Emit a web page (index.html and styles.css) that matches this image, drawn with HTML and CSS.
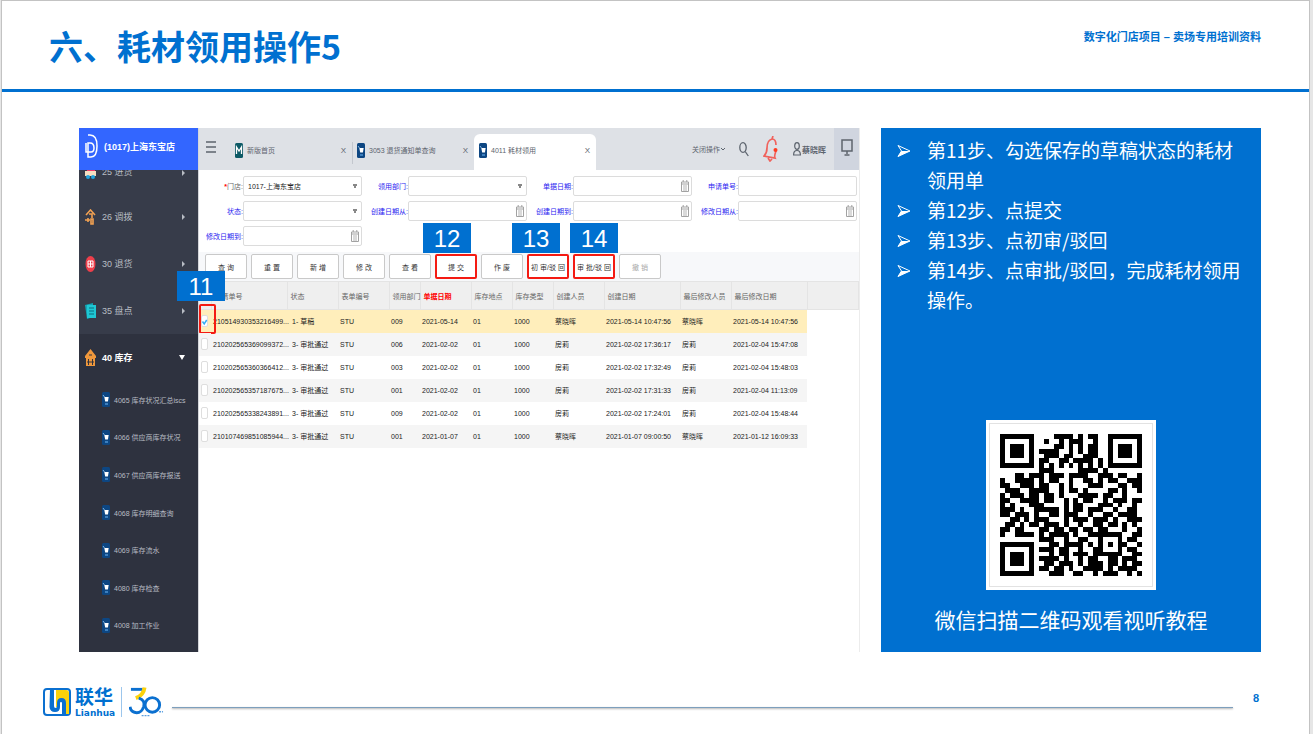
FILE: index.html
```html
<!DOCTYPE html>
<html lang="zh-CN">
<head>
  <meta charset="UTF-8" />
  <meta name="viewport" content="width=device-width, initial-scale=1.0"/>
  <title>六、耗材领用操作5</title>
  <link rel="stylesheet" href="styles.css">
</head>
<body>
  <!-- Shared icons -->
  <svg class="sprite" aria-hidden="true">
    <symbol id="cart" viewBox="0 0 8 15">
      <rect width="8" height="15" rx="1.5" fill="#0d4682"/>
      <path d="M1 3l1.500 2" stroke="#7fb4e2" stroke-width="1"/>
      <path d="M2.300 5h4.400l-.8 4.500H3.200z" fill="#fff"/>
      <path d="M3 11h3v2H3z" fill="#3c7fbe"/>
    </symbol>
    <symbol id="calendar" viewBox="0 0 8 12">
      <path d="M.5 2h7v9.500h-7zM.5 4h7M2.200 0v2M5.800 0v2" fill="none" stroke="#a2a2a2"/>
      <path d="M2 6h4M2 8h4M2 10h4" stroke="#b4b4b4"/>
    </symbol>
    <symbol id="arrow" viewBox="0 0 14 14">
      <path d="M1 1.500L13 7 1 12.500 4.500 7z" fill="none" stroke="#fff"/>
      <path d="M4.500 7H13L1 12.500z" fill="#fff"/>
    </symbol>
  </svg>

  <div class="slide">
    <!-- Header -->
    <header class="header">
      <h1>六、耗材领用操作5</h1>
      <p>数字化门店项目 – 卖场专用培训资料</p>
    </header>

    <main class="content">
      <!-- Store system -->
      <section class="app">
        <nav class="sidebar">
          <div class="store">
            <svg width="13" height="24" viewBox="0 0 13 24" fill="none" stroke="#fff" stroke-width="1.500"><path d="M3 1h2c5 0 7 4 7 11s-2 11-6 11H3V9h2c3 0 4 2 4 5s-1 4-3 4H1V9"/></svg>
            <span>(1017)上海东宝店</span>
          </div>
          <a href="#" class="menu cut">
            <svg width="11" height="15" viewBox="0 0 11 15"><path d="M2 0h8v7H2z" fill="#f0386b"/><path d="M0 6h11v5H0z" fill="#f6dfc0"/><circle cx="3" cy="12" r="2" fill="#22a5e0"/><circle cx="8" cy="12" r="2" fill="#22a5e0"/></svg>
            <span>25 进货</span><i></i>
          </a>
          <a href="#" class="menu">
            <svg width="11" height="16" viewBox="0 0 11 16" fill="none" stroke="#f2a152" stroke-width="1.600"><path d="M1 6l4.500-5 4.500 5M4 5h3v4"/><path d="M6 10h2v5H6zM0 11h5M3 9v4"/></svg>
            <span>26 调拨</span><i></i>
          </a>
          <a href="#" class="menu">
            <svg width="11" height="16" viewBox="0 0 11 16"><ellipse cx="5.500" cy="8" rx="5" ry="8" fill="#ee3f4b"/><path d="M3 5h5v6H3zM3 8h5M5.500 5v6" fill="none" stroke="#fff"/></svg>
            <span>30 退货</span><i></i>
          </a>
          <a href="#" class="menu">
            <svg width="11" height="16" viewBox="0 0 11 16"><path d="M0 2l8-2v14l-6 2z" fill="#11a6b5"/><path d="M2 2h9v13H2z" fill="#1fc7d4"/><path d="M4 5h5M4 8h5M4 11h5" stroke="#0b6f80"/></svg>
            <span>35 盘点</span><i></i>
          </a>
          <a href="#" class="menu open">
            <svg width="11" height="17" viewBox="0 0 11 17"><path d="M0 7l5.500-7L11 7v2H0zM1 9h9v8H1z" fill="#ef983c"/><path d="M3.500 10v6M7.500 10v6M2 13h7M4 6h3" stroke="#2e323f"/></svg>
            <span>40 库存</span><i></i>
          </a>
          <ul class="submenu">
            <li><a href="#"><svg width="8" height="15"><use href="#cart"/></svg>4065 库存状况汇总iscs</a></li>
            <li><a href="#"><svg width="8" height="15"><use href="#cart"/></svg>4066 供应商库存状况</a></li>
            <li><a href="#"><svg width="8" height="15"><use href="#cart"/></svg>4067 供应商库存报送</a></li>
            <li><a href="#"><svg width="8" height="15"><use href="#cart"/></svg>4068 库存明细查询</a></li>
            <li><a href="#"><svg width="8" height="15"><use href="#cart"/></svg>4069 库存流水</a></li>
            <li><a href="#"><svg width="8" height="15"><use href="#cart"/></svg>4080 库存检查</a></li>
            <li><a href="#"><svg width="8" height="15"><use href="#cart"/></svg>4008 加工作业</a></li>
          </ul>
        </nav>

        <div class="workspace">
          <!-- Tabs -->
          <div class="topbar">
            <button class="burger" aria-label="菜单"><svg width="10" height="12" viewBox="0 0 10 12"><path d="M0 1h10M0 6h10M0 11h10" stroke="#5d646e" stroke-width="1.500"/></svg></button>
            <div class="tab">
              <svg width="8" height="15" viewBox="0 0 8 15"><rect width="8" height="15" rx="1.500" fill="#0d5a66"/><path d="M1.500 11V4L4 8l2.500-4v7" fill="none" stroke="#fff" stroke-width="1.300"/></svg>
              <span>新版首页</span><button aria-label="关闭">X</button>
            </div>
            <div class="tab line">
              <svg width="8" height="15"><use href="#cart"/></svg>
              <span>3053 退货通知单查询</span><button aria-label="关闭">X</button>
            </div>
            <div class="tab active">
              <svg width="8" height="15"><use href="#cart"/></svg>
              <span>4011 耗材领用</span><button aria-label="关闭">X</button>
            </div>
            <div class="tools">
              <button>关闭操作<svg width="4" height="4" viewBox="0 0 4 4"><path d="M0 1l2 2 2-2" fill="none" stroke="#5d646e"/></svg></button>
              <button aria-label="搜索"><svg width="10" height="15" viewBox="0 0 10 15" fill="none" stroke="#5d646e" stroke-width="1.300"><ellipse cx="4" cy="5.500" rx="3.200" ry="4.800"/><path d="M6.200 9.500L9.300 14"/></svg></button>
              <button aria-label="消息"><svg width="16" height="26" viewBox="0 0 16 26" fill="none" stroke="#f0625c" stroke-width="1.700"><path d="M9 3c-4 1-5 5-5 9 0 4-1 6-3 8l11 2c-1-2 0-4 1-7M9 3c3 0 4 2 4 6M9 3l1-3M5 22l2 3 2-2"/><circle cx="12.500" cy="14" r="2" fill="#ff3b20" stroke="none"/></svg></button>
              <button class="user"><svg width="8" height="14" viewBox="0 0 8 14" fill="none" stroke="#5d646e" stroke-width="1.200"><ellipse cx="4" cy="4" rx="2.300" ry="3.400"/><path d="M.6 13c0-3 1-4.500 3.400-4.500S7.400 10 7.400 13z"/></svg>蔡晓晖</button>
              <button class="screen" aria-label="屏幕"><svg width="12" height="17" viewBox="0 0 12 17" fill="none" stroke="#5d646e" stroke-width="1.500"><path d="M1 1h10v11H1zM6 12v3M3.500 16h5"/></svg></button>
            </div>
          </div>

          <!-- Search form -->
          <form class="filters">
            <div class="field"><label for="shop" class="plain"><b>*</b>门店:</label><select id="shop"><option>1017-上海东宝店</option></select></div>
            <div class="field"><label for="dept">领用部门:</label><select id="dept"><option></option></select></div>
            <div class="field"><label for="billdate">单据日期:</label><span class="date"><input type="text" id="billdate"><svg width="8" height="12"><use href="#calendar"/></svg></span></div>
            <div class="field"><label for="billno">申请单号:</label><input type="text" id="billno"></div>
            <div class="field"><label for="state">状态:</label><select id="state"><option></option></select></div>
            <div class="field"><label for="cfrom">创建日期从:</label><span class="date"><input type="text" id="cfrom"><svg width="8" height="12"><use href="#calendar"/></svg></span></div>
            <div class="field"><label for="cto">创建日期到:</label><span class="date"><input type="text" id="cto"><svg width="8" height="12"><use href="#calendar"/></svg></span></div>
            <div class="field"><label for="mfrom">修改日期从:</label><span class="date"><input type="text" id="mfrom"><svg width="8" height="12"><use href="#calendar"/></svg></span></div>
            <div class="field"><label for="mto">修改日期到:</label><span class="date"><input type="text" id="mto"><svg width="8" height="12"><use href="#calendar"/></svg></span></div>
          </form>

          <!-- Buttons -->
          <div class="toolbar">
            <div class="action"><button>查 询</button></div>
            <div class="action"><button>重 置</button></div>
            <div class="action"><button>新 增</button></div>
            <div class="action"><button>修 改</button></div>
            <div class="action"><button>查 看</button></div>
            <div class="action marked"><button>提 交</button><span class="step">12</span></div>
            <div class="action"><button>作 废</button></div>
            <div class="action marked"><button>初 审/驳 回</button><span class="step step-first">13</span></div>
            <div class="action marked"><button>审 批/驳 回</button><span class="step step-final">14</span></div>
            <div class="action"><button disabled>撤 销</button></div>
          </div>

          <!-- Orders -->
          <table class="orders">
            <colgroup>
              <col class="w12"><col class="w76"><col class="w51"><col class="w51"><col class="w31"><col class="w51"><col class="w41"><col class="w41"><col class="w51"><col class="w76"><col class="w51"><col class="w76"><col>
            </colgroup>
            <thead>
              <tr><th></th><th>申请单号</th><th>状态</th><th>表单编号</th><th>领用部门</th><th class="red">单据日期</th><th>库存地点</th><th>库存类型</th><th>创建人员</th><th>创建日期</th><th>最后修改人员</th><th>最后修改日期</th><th></th></tr>
            </thead>
            <tbody>
              <tr class="selected"><td class="pick"><input type="checkbox" aria-label="选择" checked><svg class="tick" width="7" height="12" viewBox="0 0 7 12"><path d="M1.500 5.500l1.700 2.500 2.500-4" fill="none" stroke="#35aef5" stroke-width="1.500"/></svg><span class="box"></span><span class="step">11</span></td><td>210514930353216499...</td><td>1- 草稿</td><td>STU</td><td>009</td><td>2021-05-14</td><td>01</td><td>1000</td><td>蔡晓晖</td><td>2021-05-14 10:47:56</td><td>蔡晓晖</td><td>2021-05-14 10:47:56</td><td></td></tr>
              <tr><td class="pick"><input type="checkbox" aria-label="选择"></td><td>210202565369099372...</td><td>3- 审批通过</td><td>STU</td><td>006</td><td>2021-02-02</td><td>01</td><td>1000</td><td>房莉</td><td>2021-02-02 17:36:17</td><td>房莉</td><td>2021-02-04 15:47:08</td><td></td></tr>
              <tr><td class="pick"><input type="checkbox" aria-label="选择"></td><td>210202565360366412...</td><td>3- 审批通过</td><td>STU</td><td>003</td><td>2021-02-02</td><td>01</td><td>1000</td><td>房莉</td><td>2021-02-02 17:32:49</td><td>房莉</td><td>2021-02-04 15:48:03</td><td></td></tr>
              <tr><td class="pick"><input type="checkbox" aria-label="选择"></td><td>210202565357187675...</td><td>3- 审批通过</td><td>STU</td><td>001</td><td>2021-02-02</td><td>01</td><td>1000</td><td>房莉</td><td>2021-02-02 17:31:33</td><td>房莉</td><td>2021-02-04 11:13:09</td><td></td></tr>
              <tr><td class="pick"><input type="checkbox" aria-label="选择"></td><td>210202565338243891...</td><td>3- 审批通过</td><td>STU</td><td>009</td><td>2021-02-02</td><td>01</td><td>1000</td><td>房莉</td><td>2021-02-02 17:24:01</td><td>房莉</td><td>2021-02-04 15:48:44</td><td></td></tr>
              <tr><td class="pick"><input type="checkbox" aria-label="选择"></td><td>210107469851085944...</td><td>3- 审批通过</td><td>STU</td><td>001</td><td>2021-01-07</td><td>01</td><td>1000</td><td>蔡晓晖</td><td>2021-01-07 09:00:50</td><td>蔡晓晖</td><td>2021-01-12 16:09:33</td><td></td></tr>
            </tbody>
          </table>
        </div>
      </section>

      <!-- Steps -->
      <aside class="guide">
        <ul>
          <li><svg width="14" height="14"><use href="#arrow"/></svg><span>第11步、勾选保存的草稿状态的耗材领用单</span></li>
          <li><svg width="14" height="14"><use href="#arrow"/></svg><span>第12步、点提交</span></li>
          <li><svg width="14" height="14"><use href="#arrow"/></svg><span>第13步、点初审/驳回</span></li>
          <li><svg width="14" height="14"><use href="#arrow"/></svg><span>第14步、点审批/驳回，完成耗材领用操作。</span></li>
        </ul>
        <div class="qr"><svg id="qr" viewBox="0 0 29 29" shape-rendering="crispEdges"></svg></div>
        <p>微信扫描二维码观看视听教程</p>
      </aside>
    </main>

    <!-- Footer -->
    <footer class="footer">
      <div class="brand">
        <svg width="28" height="30" viewBox="0 0 28 30">
          <path d="M4 2h20q3 0 3 3v20q0 3-3 3H4q-3 0-3-3V5q0-3 3-3z" fill="#fff" stroke="#0b70d0" stroke-width="2"/>
          <path d="M13 3h10q3 0 3 3v21h-5V16q0-3-3-3t-3 3v4h-2z" fill="#fcd20a"/>
          <path d="M7 2h4v17q0 2 1.500 2t1.500-2v-3q0-5 4.500-5t4.500 5v11h-4V16q0-1-1-1t-1 1v4q0 5-5 5t-5.500-5z" fill="#0b70d0"/>
        </svg>
        <div class="name"><strong>联华</strong><em>Lianhua</em></div>
        <svg class="anniversary" width="36" height="30" viewBox="0 0 36 30" fill="none">
          <path d="M2 2h12" stroke="#0b70d0" stroke-width="3"/>
          <path d="M16 0q-1 8-9 11" stroke="#fcd20a" stroke-width="4"/>
          <path d="M10 11q7 2 5 9-2 6-7 6-6 0-7-6" stroke="#0b70d0" stroke-width="3"/>
          <circle cx="24" cy="18" r="7.500" stroke="#0b70d0" stroke-width="3"/>
          <path d="M31 25h4M13 29h9" stroke="#5a9fe0" stroke-width="1.500" stroke-dasharray="2 1"/>
        </svg>
      </div>
      <hr>
      <span class="page">8</span>
    </footer>
  </div>
  <script src="script.js"></script>
</body>
</html>
```

FILE: styles.css
```css
/* Reset */
* {
  margin: 0;
  padding: 0;
  box-sizing: border-box;
}
body {
  font-family: "Liberation Sans", "Noto Sans CJK SC", sans-serif;
  background-color: #e6e6e6;
  padding: 0 3px 0 1px;
}
ul {
  list-style: none;
}
a {
  color: inherit;
  text-decoration: none;
}
button, input, select {
  font: inherit;
  color: inherit;
  background: none;
  border: none;
}
svg {
  display: block;
  flex: none;
}
.sprite {
  position: absolute;
  width: 0;
  height: 0;
}
.slide {
  min-height: 100vh;
  display: flex;
  flex-direction: column;
  background-color: #fff;
  border: 1px solid #c3c3c3;
  border-bottom: none;
}
/* Header */
.header {
  display: flex;
  justify-content: space-between;
  align-items: flex-start;
  height: 91px;
  padding: 20px 48px 0 47px;
  border-bottom: 3px solid #0070d0;
  color: #0070d0;
}
.header h1 {
  font-family: "Noto Sans CJK SC", sans-serif;
  font-size: 34px;
  line-height: 50px;
}
.header p {
  font-size: 11px;
  font-weight: bold;
  line-height: 32px;
}
/* Content */
.content {
  flex: 1;
  display: grid;
  grid-template-columns: 781fr 380fr;
  gap: 21px;
  padding: 36px 48px 0 77px;
}
.app {
  display: flex;
  font-size: 7px;
  min-width: 0;
}
/* Sidebar */
.sidebar {
  display: flex;
  flex-direction: column;
  width: 119px;
  flex: none;
  background-color: #373c4a;
  color: #b8bcc4;
}
.store {
  display: flex;
  align-items: center;
  gap: 6px;
  height: 42px;
  padding: 0 6px 6px;
  background-color: #3366ff;
  color: #fff;
  font-size: 9px;
  font-weight: bold;
}
.menu {
  display: flex;
  align-items: center;
  gap: 6px;
  height: 47px;
  padding: 0 13px 0 6px;
  font-size: 9px;
}
.menu.cut {
  height: 23px;
  align-items: flex-start;
  overflow: hidden;
}
.menu.cut svg, .menu.cut span {
  margin-top: -5px;
}
.menu i {
  margin-left: auto;
  border: 3px solid transparent;
  border-left-color: #b8bcc4;
  border-right: none;
}
.menu.open {
  background-color: #2e323f;
  color: #fff;
  font-weight: bold;
}
.menu.open i {
  border: 3px solid transparent;
  border-top: 5px solid #fff;
  border-bottom: none;
}
.submenu {
  flex: 1;
  display: flex;
  flex-direction: column;
  padding-bottom: 8px;
  background-color: #2e323f;
}
.submenu li {
  flex: 1;
  display: flex;
}
.submenu a {
  display: flex;
  align-items: center;
  gap: 4px;
  padding-left: 23px;
}
/* Workspace */
.workspace {
  flex: 1;
  min-width: 0;
  border-left: 1px solid #d4d6da;
  border-right: 1px solid #ececec;
}
.topbar {
  display: flex;
  height: 42px;
  background-color: #dee1e6;
  color: #5d646e;
}
.burger {
  width: 31px;
  padding: 0 0 4px 7px;
}
.tab {
  display: flex;
  align-items: center;
  gap: 4px;
  width: 122px;
  height: 36px;
  margin-top: 6px;
  padding: 0 6px 4px 5px;
}
.tab button {
  margin-left: auto;
  font-size: 8px;
}
.tab.line {
  background: linear-gradient(#c3c7ce, #c3c7ce) left 8px / 1px 22px no-repeat;
}
.tab.active {
  background-color: #fff;
  border-radius: 6px 6px 0 0;
}
.tools {
  flex: 1;
  display: flex;
  justify-content: flex-end;
  align-items: center;
  gap: 14px;
}
.tools button {
  display: flex;
  align-items: center;
  justify-content: center;
  gap: 1px;
  height: 36px;
  white-space: nowrap;
}
.tools .user {
  font-size: 8px;
  font-weight: bold;
  margin-right: -6px;
}
.tools .screen {
  width: 25px;
  height: 42px;
  padding-bottom: 4px;
  background-color: #d0d5df;
}
/* Search form */
.filters {
  display: grid;
  grid-template-columns: repeat(4, 1fr);
  row-gap: 5px;
  padding: 6px 0;
}
.field {
  display: flex;
  align-items: center;
  padding-right: 2px;
}
.field label {
  width: 44px;
  flex: none;
  text-align: right;
  color: #2a1bf0;
}
.field .plain {
  color: #666;
}
.field b {
  color: #f00;
}
.field > input, .field > select, .date {
  flex: 1;
  width: 0;
  height: 20px;
  padding: 0 2px 0 4px;
  border: 1px solid #dcdcdc;
  border-radius: 2px;
  color: #222;
}
.field > select {
  appearance: none;
  background: linear-gradient(#888, #888) right 4px top 7px / 4px 2px no-repeat, linear-gradient(#888, #888) right 5px top 9px / 2px 2px no-repeat;
}
.date {
  display: flex;
  align-items: center;
}
.date input {
  flex: 1;
  width: 0;
}
/* Buttons */
.toolbar {
  display: flex;
  gap: 4px;
  padding: 2px 6px;
  background-color: #f7f8fa;
}
.action {
  position: relative;
  width: 42px;
}
.action button {
  width: 100%;
  height: 25px;
  border: 1px solid #c9c9c9;
  border-radius: 2px;
  background-color: #fff;
  color: #333;
  white-space: nowrap;
}
.action button:disabled {
  color: #aaa;
}
.action.marked button {
  border: 2px solid #f41a12;
}
/* Numbered callouts */
.step {
  position: absolute;
  left: -12px;
  top: -31px;
  width: 48px;
  height: 30px;
  background-color: #0070d0;
  color: #fff;
  font-size: 24px;
  line-height: 32px;
  text-align: center;
}
.step-first {
  left: -15px;
}
.step-final {
  left: -3px;
}
/* Orders table */
.orders {
  width: 100%;
  table-layout: fixed;
  border-collapse: collapse;
}
.w12 { width: 12px; }
.w31 { width: 31px; }
.w41 { width: 41px; }
.w51 { width: 51px; }
.w76 { width: 76px; }
.orders th {
  height: 28px;
  padding-left: 3px;
  text-align: left;
  font-weight: normal;
  color: #666;
  white-space: nowrap;
  background-color: #efefef;
  border: 1px solid #e4e4e4;
  border-width: 1px 1px 1px 0;
}
.orders .red {
  color: #f00;
  font-weight: bold;
}
.orders td {
  height: 23px;
  padding-left: 2px;
  color: #222;
  white-space: nowrap;
}
.orders td:nth-child(3) {
  padding-left: 5px;
}
.orders tbody tr:nth-child(even) td {
  background-color: #f5f5f5;
}
.orders .selected td {
  background-color: #ffeebb;
}
.orders tbody tr td:last-child {
  background-color: #fff;
}
.orders .pick {
  position: relative;
}
.pick input {
  appearance: none;
  display: block;
  width: 7px;
  height: 12px;
  border: 1px solid #dedede;
  border-radius: 2px;
  background-color: #fff;
}
.pick .tick {
  position: absolute;
  left: 2px;
  top: 6px;
}
.pick .box {
  position: absolute;
  left: 0;
  top: -6px;
  width: 17px;
  height: 30px;
  border: 2px solid #f41a12;
  border-radius: 2px;
}
.pick .step {
  left: -22px;
  top: -39px;
}
/* Steps panel */
.guide {
  display: flex;
  flex-direction: column;
  align-items: center;
  padding: 7px 16px 18px;
  background-color: #0070d0;
  color: #fff;
  font-family: "Noto Sans CJK SC", sans-serif;
  font-size: 19px;
  line-height: 30px;
}
.guide ul {
  align-self: stretch;
}
.guide li {
  display: flex;
  gap: 16px;
}
.guide li svg {
  margin-top: 9px;
}
.guide p {
  margin-top: 14px;
  font-size: 21px;
}
.qr {
  width: 170px;
  margin-top: auto;
  padding: 3px;
  background-color: #fff;
}
.qr svg {
  width: 100%;
  border: 1px solid #e2e2e2;
  padding: 10px;
}
/* Footer */
.footer {
  display: flex;
  height: 82px;
  padding: 35px 48px 0 41px;
  color: #0070d0;
}
.brand {
  display: flex;
  align-items: flex-start;
}
.name {
  display: flex;
  flex-direction: column;
  margin: 1px 6px 0 4px;
}
.name strong {
  font-size: 19px;
  line-height: 20px;
}
.name em {
  font-family: "DejaVu Sans", sans-serif;
  font-size: 9px;
  font-style: normal;
  font-weight: bold;
  line-height: 10px;
}
.anniversary {
  padding-left: 7px;
  width: 43px;
  border-left: 1px solid #9cc6ec;
}
.footer hr {
  flex: 1;
  height: 1px;
  margin: 20px 20px 0 8px;
  border: none;
  background-color: #7d9fbd;
  box-shadow: 0 1px 2px #999;
}
.page {
  width: 8px;
  font-size: 11px;
  font-weight: bold;
  line-height: 22px;
}
```

FILE: script.js
```js
// QR modules, one string per row
const rows = [
  "#######....####.#.##..#######",
  "#.....#..#..#.###..#..#.....#",
  "#.###.#....##.#.#.##..#.###.#",
  "#.###.#.####..#.#.##..#.###.#",
  "#.###.#..###.##..###..#.###.#",
  "#.....#.##..##.####.#.#.....#",
  "#######.#.#.#.#.#.#.#.#######",
  "........###.....####.#.......",
  "...##.###.###.####..###.##..#",
  "#..####.#.##..#..##.#.##..###",
  "##..###.##..#.#...###...##.##",
  ".###..####..#.##.#....##.#..#",
  "#.###.##.##.#...####.##..#...",
  "##..####.##..#.#.##..#.###.##",
  "#.#...###....#.##...###.#..#.",
  "###.#..#####.#.##.###..#..##.",
  "##.###.#..##.###..#..##.####.",
  "..##.#.###...#.###.###.#..###",
  ".##.#.##.###.#..#..##.##.#.#.",
  "##.##...##.##.##.##.##...#..#",
  "#..####.#.####.#..#######..##",
  "........###..#..##..#...#.##.",
  "#######...##.####.#.#.#.##..#",
  "#.....#.###.##..#..##...#.##.",
  "#.###.#...#.##.###.######..##",
  "#.###.#.####.#..#.##..##.###.",
  "#.###.#..##.###.#.###.##.#.##",
  "#.....#.##.##.#..####.#.####.",
  "#######...###..##..#.###..#.#"
];

let d = "";
rows.forEach((row, y) => {
  [...row].forEach((cell, x) => {
    if (cell === "#") d += `M${x} ${y}h1v1h-1z`;
  });
});
const path = document.createElementNS("http://www.w3.org/2000/svg", "path");
path.setAttribute("d", d);
document.getElementById("qr").appendChild(path);
```
